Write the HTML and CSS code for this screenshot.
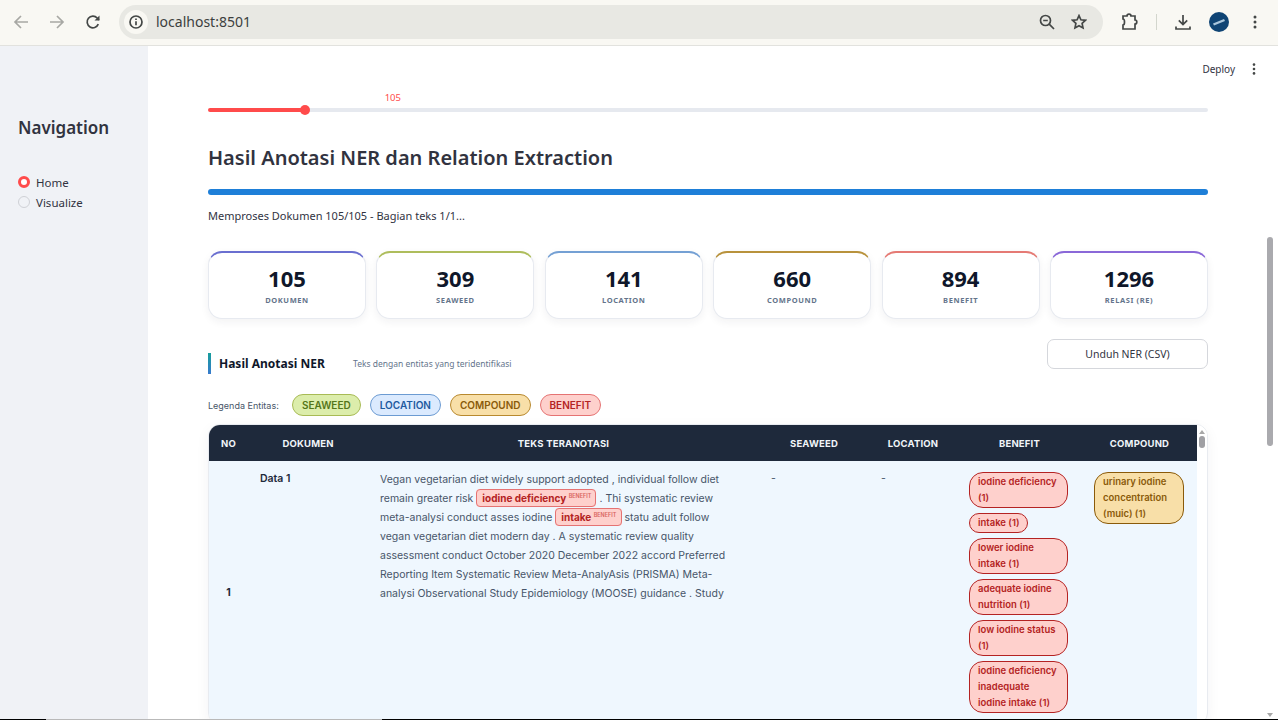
FILE: index.html
```html
<!DOCTYPE html>
<html lang="en">
<head>
    <meta charset="UTF-8">
    <title>localhost:8501</title>
    <link rel="stylesheet" href="styles.css">
</head>
<body>
    <header class="chrome">
        <div class="nav-btn">
            <svg class="ico-faded" width="16" height="16" viewBox="0 0 16 16"><path d="M15 8H2M8 2L2 8l6 6"/></svg>
        </div>
        <div class="nav-btn">
            <svg class="ico-faded" width="16" height="16" viewBox="0 0 16 16"><path d="M1 8h13M8 2l6 6-6 6"/></svg>
        </div>
        <div class="nav-btn">
            <svg class="ico" width="16" height="16" viewBox="0 0 16 16"><path d="M13.3 10.2A5.8 5.8 0 1 1 12.2 4L14 5.8"/><path class="ico-fill" d="M14.5 1.5v5h-5z"/></svg>
        </div>
        <div class="omnibox">
            <div class="site-info">
                <svg class="ico" width="14" height="14" viewBox="0 0 14 14"><circle cx="7" cy="7" r="6"/><path d="M7 6.2v4M7 3.6v1.3"/></svg>
            </div>
            <span class="url">localhost:8501</span>
            <div class="omni-btn">
                <svg class="ico" width="16" height="16" viewBox="0 0 16 16"><circle cx="6.5" cy="6.5" r="5"/><path d="M4.2 6.5h4.6M10.2 10.2L15 15"/></svg>
            </div>
            <div class="omni-btn">
                <svg class="ico" width="16" height="16" viewBox="0 0 16 16"><path d="M8 1.6l1.9 4.2 4.6.5-3.4 3.1.9 4.5L8 11.7l-4 2.2.9-4.5L1.5 6.3l4.6-.5z"/></svg>
            </div>
        </div>
        <div class="actions">
            <div class="nav-btn ext-btn">
                <svg class="ico" width="16" height="18" viewBox="0 0 16 18"><path d="M1 6V3h4c0-2.4 4-2.4 4 0h4v4c2.4 0 2.4 4 0 4v5H1v-4c2 0 2-6 0-6z"/></svg>
            </div>
            <span class="divider"></span>
            <div class="nav-btn dl-btn">
                <svg class="ico" width="16" height="16" viewBox="0 0 16 16"><path d="M8 1v9M3.8 6.4L8 10.6l4.2-4.2M1 12.5V15h14v-2.5"/></svg>
            </div>
            <div class="nav-btn">
                <svg width="20" height="20" viewBox="0 0 20 20"><circle cx="10" cy="10" r="10" fill="#0f4474"/><path d="M4 11.5l11-4.5 1 2-11 4.5z" fill="#a9c6dc"/></svg>
            </div>
            <div class="nav-btn">
                <svg class="ico-dots" width="4" height="14" viewBox="0 0 4 14"><circle cx="2" cy="2" r="1.5"/><circle cx="2" cy="7" r="1.5"/><circle cx="2" cy="12" r="1.5"/></svg>
            </div>
        </div>
    </header>

    <div class="app">
        <aside class="sidebar">
            <h2 class="side-title">Navigation</h2>
            <div class="radio-row">
                <span class="radio radio-on"></span>
                <span>Home</span>
            </div>
            <div class="radio-row">
                <span class="radio"></span>
                <span>Visualize</span>
            </div>
        </aside>

        <main class="main">
            <div class="toolbar">
                <span class="deploy">Deploy</span>
                <svg class="ico-dots" width="4" height="12" viewBox="0 0 4 12"><circle cx="2" cy="1.6" r="1.3"/><circle cx="2" cy="6" r="1.3"/><circle cx="2" cy="10.4" r="1.3"/></svg>
            </div>

            <div class="content">
                <div class="slider-value">105</div>
                <div class="slider">
                    <span class="slider-thumb"></span>
                </div>

                <h1 class="page-title">Hasil Anotasi NER dan Relation Extraction</h1>

                <div class="progress"></div>
                <p class="status">Memproses Dokumen 105/105 - Bagian teks 1/1...</p>

                <div class="stats">
                    <div class="stat stat-doc"><div class="stat-num">105</div><div class="stat-label">DOKUMEN</div></div>
                    <div class="stat stat-sea"><div class="stat-num">309</div><div class="stat-label">SEAWEED</div></div>
                    <div class="stat stat-loc"><div class="stat-num">141</div><div class="stat-label">LOCATION</div></div>
                    <div class="stat stat-com"><div class="stat-num">660</div><div class="stat-label">COMPOUND</div></div>
                    <div class="stat stat-ben"><div class="stat-num">894</div><div class="stat-label">BENEFIT</div></div>
                    <div class="stat stat-rel"><div class="stat-num">1296</div><div class="stat-label">RELASI (RE)</div></div>
                </div>

                <div class="section-head">
                    <div class="section-title">
                        <h3>Hasil Anotasi NER</h3>
                        <span>Teks dengan entitas yang teridentifikasi</span>
                    </div>
                    <button class="download" type="button">Unduh NER (CSV)</button>
                </div>

                <div class="legend">
                    <span class="legend-label">Legenda Entitas:</span>
                    <span class="legend-pill pill-sea">SEAWEED</span>
                    <span class="legend-pill pill-loc">LOCATION</span>
                    <span class="legend-pill pill-com">COMPOUND</span>
                    <span class="legend-pill pill-ben">BENEFIT</span>
                </div>

                <div class="table-wrap">
                    <table class="ner-table">
                        <colgroup>
                            <col class="col-no">
                            <col class="col-doc">
                            <col class="col-text">
                            <col class="col-sea">
                            <col class="col-loc">
                            <col class="col-ben">
                            <col class="col-com">
                        </colgroup>
                        <thead>
                            <tr>
                                <th>NO</th>
                                <th>DOKUMEN</th>
                                <th>TEKS TERANOTASI</th>
                                <th>SEAWEED</th>
                                <th>LOCATION</th>
                                <th>BENEFIT</th>
                                <th>COMPOUND</th>
                            </tr>
                        </thead>
                        <tbody>
                            <tr>
                                <td class="cell-no">1</td>
                                <td class="cell-doc">Data 1</td>
                                <td class="cell-text">
                                    Vegan vegetarian diet widely support adopted , individual follow diet remain greater risk
                                    <span class="entity">iodine deficiency <sup>BENEFIT</sup></span>
                                    . Thi systematic review meta-analysi conduct asses iodine
                                    <span class="entity">intake <sup>BENEFIT</sup></span>
                                    statu adult follow vegan vegetarian diet modern day . A systematic review quality assessment conduct October 2020 December 2022 accord Preferred Reporting Item Systematic Review Meta-AnalyAsis (PRISMA) Meta-analysi Observational Study Epidemiology (MOOSE) guidance . Study
                                </td>
                                <td class="cell-dash">-</td>
                                <td class="cell-dash">-</td>
                                <td class="cell-pills">
                                    <div class="pills">
                                        <span class="pill pill-ben">iodine deficiency (1)</span>
                                        <span class="pill pill-ben">intake (1)</span>
                                        <span class="pill pill-ben">lower iodine intake (1)</span>
                                        <span class="pill pill-ben">adequate iodine nutrition (1)</span>
                                        <span class="pill pill-ben">low iodine status (1)</span>
                                        <span class="pill pill-ben">iodine deficiency inadequate iodine intake (1)</span>
                                    </div>
                                </td>
                                <td class="cell-pills">
                                    <div class="pills">
                                        <span class="pill pill-com">urinary iodine concentration (muic) (1)</span>
                                    </div>
                                </td>
                            </tr>
                        </tbody>
                    </table>
                    <div class="table-scrollbar">
                        <span class="arrow-up"></span>
                        <span class="table-thumb"></span>
                    </div>
                </div>
            </div>

            <div class="page-scrollbar">
                <span class="page-thumb"></span>
                <span class="arrow-down"></span>
            </div>
        </main>
    </div>

    <div class="screen-edge">
        <span class="edge-black edge-a"></span>
        <span class="edge-gray"></span>
        <span class="edge-black edge-b"></span>
    </div>
</body>
</html>
```

FILE: styles.css
```css
/* Reset margin and padding */
* {
    margin: 0;
    padding: 0;
    box-sizing: border-box;
}

body {
    width: 1278px;
    height: 720px;
    overflow: hidden;
    position: relative;
    font-family: "Noto Sans", sans-serif;
    background-color: #ffffff;
    color: #31333f;
    display: flex;
    flex-direction: column;
}

/* Browser bar */
.chrome {
    height: 46px;
    flex: none;
    display: flex;
    align-items: center;
    padding: 0 5px 2px 3px;
    background-color: #f9f8f3;
    border-bottom: 1px solid #e2e2de;
}

.nav-btn {
    width: 36px;
    height: 36px;
    flex: none;
    display: flex;
    align-items: center;
    justify-content: center;
}

.ico, .ico-faded {
    fill: none;
    stroke: #444746;
    stroke-width: 1.7;
}

.ico-faded {
    stroke: #a8a8a4;
}

.ico-fill {
    fill: #444746;
    stroke: none;
}

.ico-dots {
    fill: #444746;
}

.omnibox {
    flex: 1;
    height: 34px;
    margin-left: 8px;
    padding: 0 8px 0 5px;
    display: flex;
    align-items: center;
    background-color: #e8e8e3;
    border-radius: 17px;
}

.site-info {
    width: 24px;
    height: 24px;
    border-radius: 50%;
    background-color: #f9f8f3;
    display: flex;
    align-items: center;
    justify-content: center;
}

.url {
    flex: 1;
    margin-left: 8px;
    font-size: 14px;
    color: #3c3f3e;
}

.omni-btn {
    width: 32px;
    height: 32px;
    display: flex;
    align-items: center;
    justify-content: center;
}

.actions {
    display: flex;
    align-items: center;
}

.ext-btn {
    margin-left: 9px;
}

.divider {
    width: 1px;
    height: 16px;
    margin-left: 8px;
    background-color: #d3d6cd;
}

.dl-btn {
    margin-left: 8px;
}

/* Page layout */
.app {
    flex: 1;
    min-height: 0;
    display: flex;
}

.sidebar {
    width: 148px;
    flex: none;
    padding: 69px 18px 0;
    background-color: #f0f2f6;
}

.side-title {
    font-size: 17px;
    line-height: 26px;
    font-weight: 600;
    margin-bottom: 31px;
}

.radio-row {
    height: 20px;
    display: flex;
    align-items: center;
    gap: 6px;
    font-size: 11.5px;
    color: #31333f;
}

.radio {
    width: 12px;
    height: 12px;
    border-radius: 50%;
    background-color: #f0f2f6;
    border: 1px solid #cfd1d6;
}

.radio-on {
    background-color: #ffffff;
    border: 3.5px solid #ff4b4b;
}

.main {
    flex: 1;
    min-width: 0;
    position: relative;
}

.toolbar {
    height: 46px;
    display: flex;
    align-items: center;
    padding-right: 22px;
    justify-content: flex-end;
}

.deploy {
    font-size: 10px;
    margin-right: 17px;
}

.content {
    margin: 0 70px 0 60px;
}

/* Slider */
.slider-value {
    height: 12px;
    width: 193px;
    text-align: right;
    font-size: 9.5px;
    line-height: 12px;
    color: #ff4b4b;
}

.slider {
    height: 4px;
    margin-top: 4px;
    display: flex;
    align-items: center;
    border-radius: 2px;
    background: linear-gradient(to right, #ff4b4b 9.7%, #e6e9ef 9.7%);
}

.slider-thumb {
    width: 10px;
    height: 10px;
    margin-left: 92px;
    border-radius: 50%;
    background-color: #ff4b4b;
}

.page-title {
    margin-top: 32px;
    font-size: 20px;
    line-height: 28px;
    font-weight: 600;
}

.progress {
    height: 6px;
    margin-top: 17px;
    border-radius: 3px;
    background-color: #1e7fd8;
}

.status {
    margin-top: 13px;
    font-size: 11px;
    line-height: 16px;
}

/* Metric cards */
.stats {
    display: grid;
    grid-template-columns: repeat(6, 1fr);
    gap: 10.4px;
    margin-top: 27px;
}

.stat {
    height: 68px;
    padding-top: 11px;
    text-align: center;
    background-color: #ffffff;
    border: 1px solid #e7eaf0;
    border-top: 2px solid;
    border-radius: 14px;
    box-shadow: 0 3px 8px rgba(30, 41, 59, 0.06);
}

.stat-doc { border-top-color: #6a6fd0; }
.stat-sea { border-top-color: #aebd5c; }
.stat-loc { border-top-color: #74a0d4; }
.stat-com { border-top-color: #b8923c; }
.stat-ben { border-top-color: #e57a74; }
.stat-rel { border-top-color: #8a68d8; }

.stat-num {
    font-size: 22px;
    line-height: 28px;
    font-weight: 700;
    color: #0f172a;
}

.stat-label {
    margin-top: 3px;
    font-size: 7.5px;
    line-height: 10px;
    font-weight: 700;
    letter-spacing: 0.6px;
    color: #64748b;
}

/* Section heading */
.section-head {
    display: flex;
    justify-content: space-between;
    align-items: flex-start;
    margin-top: 20px;
}

.section-title {
    display: flex;
    align-items: center;
    height: 21px;
    margin-top: 14px;
    padding-left: 8px;
    border-left: 3px solid;
    border-image: linear-gradient(to bottom, #14a098, #3a78d0) 1;
}

.section-title h3 {
    width: 134px;
    font-size: 12px;
    font-weight: 700;
    color: #0f172a;
}

.section-title span {
    font-size: 8.5px;
    color: #64748b;
}

.download {
    width: 161px;
    height: 30px;
    font-family: "Noto Sans", sans-serif;
    font-size: 10.5px;
    color: #31333f;
    background-color: #ffffff;
    border: 1px solid #d5d7dc;
    border-radius: 7px;
}

/* Legend */
.legend {
    display: flex;
    align-items: center;
    gap: 9px;
    margin-top: 20px;
}

.legend-label {
    font-family: Inter, sans-serif;
    font-size: 9px;
    color: #475569;
    width: 75px;
}

.legend-pill {
    height: 22px;
    padding: 0 9px;
    display: flex;
    align-items: center;
    font-family: Inter, sans-serif;
    font-size: 10px;
    font-weight: 600;
    border: 1px solid;
    border-radius: 11px;
}

.pill-sea { background-color: #dcedab; border-color: #a8bb55; color: #55761a; }
.pill-loc { background-color: #dbeafe; border-color: #6c9bd2; color: #1e5aa0; }
.pill-com { background-color: #f8dfa8; border-color: #b8892f; color: #8a5a0a; }
.pill-ben { background-color: #fed0cc; border-color: #e57373; color: #b42323; }

/* Table */
.table-wrap {
    display: flex;
    align-items: flex-start;
    margin-top: 8px;
    border: 1px solid #e8ebf0;
    border-radius: 12px;
    overflow: hidden;
    box-shadow: 0 4px 14px rgba(30, 41, 59, 0.05);
}

.ner-table {
    width: 988px;
    flex: none;
    table-layout: fixed;
    border-collapse: collapse;
    font-family: Inter, sans-serif;
}

.col-no { width: 39px; }
.col-doc { width: 120px; }
.col-text { width: 391px; }
.col-sea { width: 110px; }
.col-loc { width: 88px; }
.col-ben { width: 125px; }
.col-com { width: 115px; }

.ner-table th {
    height: 36px;
    font-size: 9.5px;
    font-weight: 700;
    letter-spacing: 0.2px;
    color: #f1f5f9;
    background-color: #1e293b;
}

.ner-table td {
    padding: 11px 12px;
    vertical-align: top;
    background-color: #eff7fe;
    font-size: 10.5px;
    color: #475569;
}

.ner-table .cell-no {
    padding: 0;
    vertical-align: middle;
    text-align: center;
    font-weight: 700;
    color: #1e293b;
}

.ner-table .cell-doc {
    font-weight: 600;
    line-height: 13px;
    color: #1e293b;
}

.ner-table .cell-text {
    padding-top: 9px;
    padding-right: 28px;
    line-height: 19px;
}

.ner-table .cell-dash {
    line-height: 14px;
}

.entity {
    padding: 2px 4px 2px 5px;
    font-weight: 700;
    font-size: 10px;
    color: #b42323;
    background-color: #fed0cc;
    border: 1px solid #e57373;
    border-radius: 4px;
}

.entity sup {
    font-size: 5.5px;
    font-weight: 600;
    color: #d9645f;
    line-height: 0;
}

.pills {
    display: flex;
    flex-direction: column;
    align-items: flex-start;
    gap: 5px;
}

.pill {
    padding: 1px 8px;
    font-size: 9.5px;
    line-height: 16px;
    font-weight: 600;
    border: 1px solid;
    border-radius: 14px;
}

.pill-ben.pill {
    max-width: 99px;
}

.pill-com.pill {
    max-width: 90px;
}

.table-scrollbar {
    flex: 1;
    display: flex;
    flex-direction: column;
    align-items: center;
    padding-top: 5px;
    background-color: #ffffff;
}

.arrow-up {
    width: 0;
    height: 0;
    border-left: 3px solid transparent;
    border-right: 3px solid transparent;
    border-bottom: 4px solid #a8a8a8;
}

.table-thumb {
    width: 6px;
    height: 12px;
    margin-top: 2px;
    border-radius: 3px;
    background-color: #a0a0a4;
}

/* Page scrollbar, over the right edge of the main area */
.page-scrollbar {
    position: absolute;
    top: 0;
    right: 0;
    bottom: 0;
    width: 16px;
    display: flex;
    flex-direction: column;
    align-items: center;
    padding: 191px 0 3px;
}

.page-thumb {
    width: 6px;
    height: 209px;
    border-radius: 3px;
    background-color: #aaaaae;
}

.arrow-down {
    width: 0;
    height: 0;
    margin-top: auto;
    border-left: 3px solid transparent;
    border-right: 3px solid transparent;
    border-top: 4px solid #a8a8a8;
}

/* Strip of the desktop behind the window */
.screen-edge {
    position: absolute;
    left: 0;
    right: 0;
    bottom: 0;
    height: 1px;
    display: flex;
}

.edge-black {
    background-color: #000000;
}

.edge-a {
    width: 46px;
}

.edge-gray {
    width: 336px;
    background-color: #b9b9b9;
}

.edge-b {
    flex: 1;
}
```
